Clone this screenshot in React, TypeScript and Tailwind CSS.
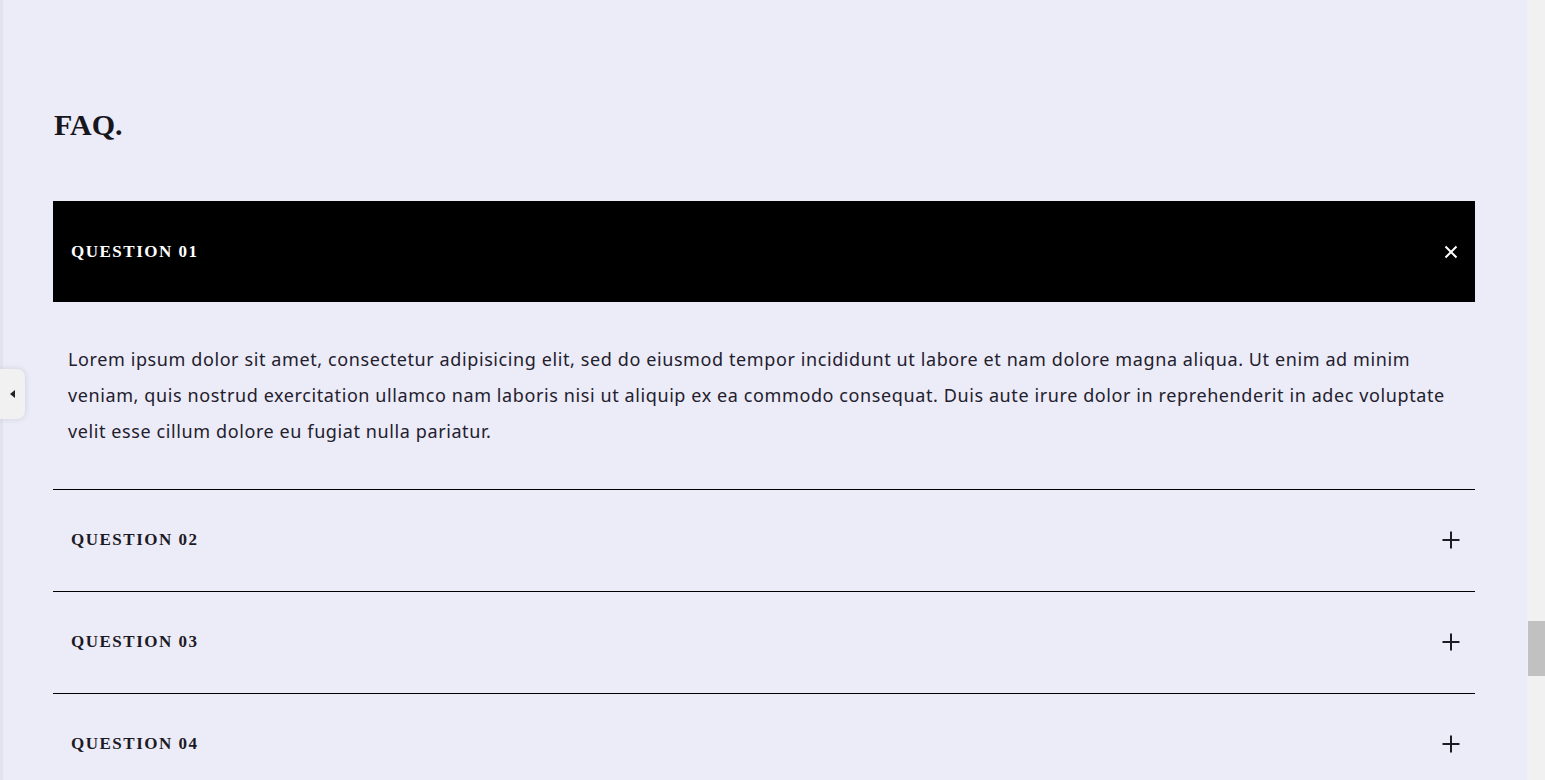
import React from "react";

const serif = { fontFamily: '"Liberation Serif", "Times New Roman", serif' };

function Plus() {
  return (
    <svg width="18" height="18" viewBox="0 0 18 18" className="block">
      <path d="M9 0.5V17.5M0.5 9H17.5" stroke="#1c1c24" strokeWidth="2" />
    </svg>
  );
}

function Close() {
  return (
    <svg width="14" height="14" viewBox="0 0 14 14" className="block">
      <path d="M1.5 1.5L12.5 12.5M12.5 1.5L1.5 12.5" stroke="#ffffff" strokeWidth="2" />
    </svg>
  );
}

function Row({ label }: { label: string }) {
  return (
    <div className="flex h-[102px] items-center justify-between border-b border-black pb-[1px] pl-[18px] pr-[15px]">
      <span
        className="text-[17px] font-bold uppercase tracking-[1.5px] text-[#1c1a24]"
        style={serif}
      >
        {label}
      </span>
      <Plus />
    </div>
  );
}

export default function App() {
  return (
    <div className="flex h-[780px] w-full overflow-hidden bg-[#ecebf8]">
      <div className="relative flex-1 border-l-[3px] border-[#e2e1ee]">
        <div className="absolute left-[-3px] top-[369px] flex h-[50px] w-[25px] items-center justify-center rounded-r-[8px] bg-[#f1f1f1] shadow-[0_0_6px_rgba(0,0,0,0.12)]">
          <span className="block h-0 w-0 border-y-[4px] border-r-[5px] border-y-transparent border-r-[#222]" />
        </div>
        <div className="pl-[50px] pr-[52px] pt-[103px]">
          <h2 className="pl-[1px] text-[30px] font-bold leading-[44px] text-[#17161d]" style={serif}>
            FAQ.
          </h2>
          <div className="mt-[54px]">
            <div className="flex h-[101px] items-center justify-between bg-black pl-[18px] pr-[17px]">
              <span
                className="text-[17px] font-bold uppercase tracking-[1.5px] text-white"
                style={serif}
              >
                Question 01
              </span>
              <Close />
            </div>
            <div
              className="border-b border-black px-[15px] pb-[40px] pt-[39px] text-[18px] leading-[36px] tracking-[0.6px] text-[#22202c]"
              style={{ fontFamily: '"Noto Sans", "Open Sans", sans-serif' }}
            >
              Lorem ipsum dolor sit amet, consectetur adipisicing elit, sed do eiusmod tempor incididunt ut labore et nam dolore magna aliqua. Ut enim ad minim veniam, quis nostrud exercitation ullamco nam laboris nisi ut aliquip ex ea commodo consequat. Duis aute irure dolor in reprehenderit in adec voluptate velit esse cillum dolore eu fugiat nulla pariatur.
            </div>
            <Row label="Question 02" />
            <Row label="Question 03" />
            <Row label="Question 04" />
          </div>
        </div>
      </div>
      <div className="flex w-[18px] flex-col bg-[#f1f1f1]">
        <div className="ml-[1px] mt-[621px] h-[55px] w-[17px] bg-[#c1c1c1]" />
      </div>
    </div>
  );
}
